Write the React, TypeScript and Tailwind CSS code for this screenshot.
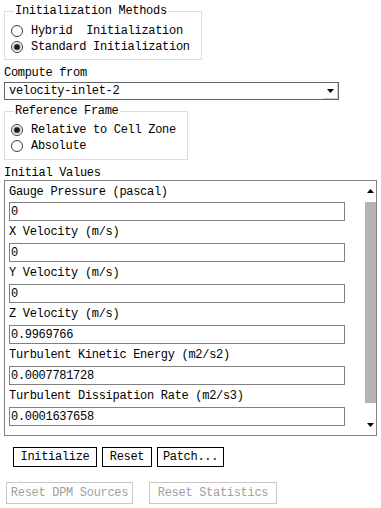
import React from 'react';

const fieldRows = [
    { label: 'Gauge Pressure (pascal)', value: '0' },
    { label: 'X Velocity (m/s)', value: '0' },
    { label: 'Y Velocity (m/s)', value: '0' },
    { label: 'Z Velocity (m/s)', value: '0.9969766' },
    { label: 'Turbulent Kinetic Energy (m2/s2)', value: '0.0007781728' },
    { label: 'Turbulent Dissipation Rate (m2/s3)', value: '0.0001637658' },
];

const Radio = ({ checked, label }: { checked?: boolean; label: string }) => (
    <div className="flex h-[16px] items-center">
        <svg width="12" height="12" viewBox="0 0 12 12" className="ml-[6px] mr-[8px] shrink-0">
            <circle cx="6" cy="6" r="5.5" fill="#ffffff" stroke="#3c3c3c" strokeWidth="1" />
            {checked && (
                <>
                    <circle cx="6" cy="6" r="3.6" fill="#8a8a8a" />
                    <circle cx="6" cy="6" r="2.6" fill="#1a1a1a" />
                </>
            )}
        </svg>
        <span className="whitespace-pre leading-[14px]">{label}</span>
    </div>
);

const App = () => {
    return (
        <div
            className="h-[508px] w-[381px] bg-white text-[12px] tracking-[-0.3px] text-black"
            style={{ fontFamily: '"Liberation Mono", "DejaVu Sans Mono", monospace' }}
        >
            <div className="flex flex-col px-[4px] pt-[4px]">
                {/* init method */}
                <fieldset className="w-[198px] border border-[#dcdcdc] pt-[5px] pb-[4px]">
                    <legend className="ml-[9px] px-[1px] leading-[14px]">Initialization Methods</legend>
                    <Radio label="Hybrid  Initialization" />
                    <Radio checked label="Standard Initialization" />
                </fieldset>

                <div className="h-[22px] pt-[6px] leading-[14px]">Compute from</div>
                <div className="flex h-[18px] w-[335px] items-center border border-[#646464]">
                    <span className="flex-1 pl-[4px] leading-[14px]">velocity-inlet-2</span>
                    <div className="flex h-full w-[15px] items-center justify-center border-r border-b border-[#c8c8c8]">
                        <svg width="7" height="4" viewBox="0 0 7 4">
                            <path d="M0 0h7L3.5 4z" fill="#000" />
                        </svg>
                    </div>
                </div>

                <fieldset className="mt-[4px] w-[184px] border border-[#dcdcdc] pt-[4px] pb-[5px]">
                    <legend className="ml-[9px] px-[1px] leading-[14px]">Reference Frame</legend>
                    <Radio checked label="Relative to Cell Zone" />
                    <Radio label="Absolute" />
                </fieldset>

                <div className="h-[20px] pt-[6px] leading-[14px]">Initial Values</div>
                <div className="flex h-[256px] w-[373px] border border-[#808080]">
                    <div className="flex-1 pl-[4px] pb-[9px]">
                        {fieldRows.map((row, i) => (
                            <div key={row.label}>
                                <div className={`${i === 0 ? 'h-[21px]' : 'h-[22px]'} flex items-center leading-[14px]`}>
                                    {row.label}
                                </div>
                                <div className="flex h-[19px] w-[336px] items-center border border-[#808080] pl-[1px] leading-[14px]">
                                    {row.value}
                                </div>
                            </div>
                        ))}
                    </div>
                    {/* scrollbar */}
                    <div className="flex w-[11px] flex-col items-center">
                        <div className="flex h-[19px] items-center">
                            <svg width="7" height="4" viewBox="0 0 7 4">
                                <path d="M3.5 0L7 4H0z" fill="#000" />
                            </svg>
                        </div>
                        <div className="mt-[2px] h-[201px] w-full bg-[#b4b4b4]" />
                        <svg width="7" height="4" viewBox="0 0 7 4" className="mt-[20px]">
                            <path d="M0 0h7L3.5 4z" fill="#000" />
                        </svg>
                    </div>
                </div>

                <div className="mt-[11px] flex gap-[5px] pl-[9px]">
                    <button className="h-[20px] w-[84px] border border-black leading-[14px]">Initialize</button>
                    <button className="h-[20px] w-[50px] border border-black leading-[14px]">Reset</button>
                    <button className="h-[20px] w-[67px] border border-black leading-[14px]">Patch...</button>
                </div>
                <div className="mt-[15px] flex gap-[16px] pl-[2px]">
                    <button className="h-[22px] w-[127px] border border-[#c8c8c8] leading-[14px] text-[#a0a0a0]">
                        Reset DPM Sources
                    </button>
                    <button className="h-[22px] w-[128px] border border-[#c8c8c8] leading-[14px] text-[#a0a0a0]">
                        Reset Statistics
                    </button>
                </div>
            </div>
        </div>
    );
};

export default App;
